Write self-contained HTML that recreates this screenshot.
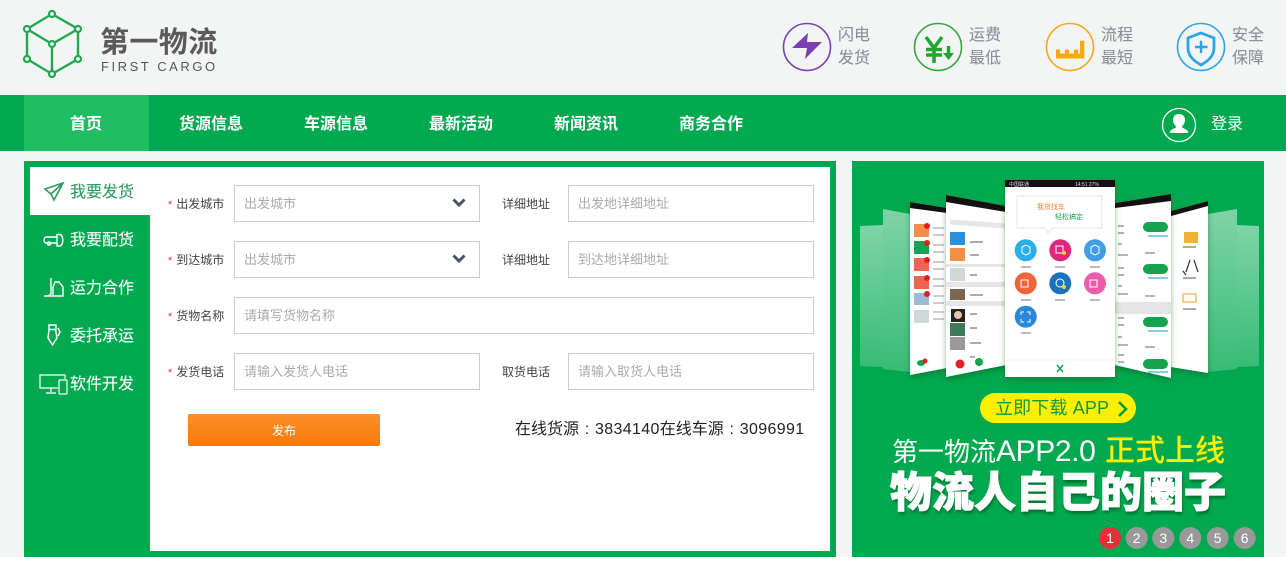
<!DOCTYPE html>
<html lang="zh">
<head>
<meta charset="utf-8">
<title>第一物流</title>
<style>
*{margin:0;padding:0;box-sizing:border-box}
html,body{width:1286px;height:564px;overflow:hidden;background:#fff;font-family:"Liberation Sans","Noto Sans CJK SC",sans-serif}
#page{position:relative;width:1286px;height:564px;overflow:hidden}
.a{position:absolute;white-space:nowrap}
.f{position:absolute;height:37px;background:#fff;border:1px solid #ccc;font-size:13px;line-height:35px;color:#aaa;padding-left:9px}
.l{position:absolute;font-size:12px;color:#444;line-height:18px;white-space:nowrap}
.l i{color:#e33;font-style:normal;margin-right:4px;font-size:11px}
.n{position:absolute;top:97px;height:56px;line-height:56px;font-size:16px;font-weight:700;color:#fff;white-space:nowrap}
.s{position:absolute;left:70px;font-size:16px;font-weight:400;-webkit-text-stroke:.1px currentColor;color:#fff;line-height:24px;white-space:nowrap}
.h{position:absolute;font-size:16px;font-weight:400;-webkit-text-stroke:.1px currentColor;line-height:23px;color:#8a8f99;white-space:nowrap}
.c{display:inline-block;width:16px;text-align:center}
.d{letter-spacing:.35px}
</style>
</head>
<body>
<div id="page">
<div class="a" style="left:0;top:0;width:1286px;height:557px;background:#f3f4f4"></div>

<!-- logo -->
<svg class="a" style="left:20px;top:8px" width="66" height="72" viewBox="0 0 66 72" fill="none" stroke="#22a84f" stroke-width="2.400">
<path d="M32 6L58 21V51L32 66L7 51V21Z"/><path d="M7 21L32 36L58 21M32 36V66"/>
<g fill="#f3f4f4" stroke-width="2.200"><circle cx="32" cy="6" r="3"/><circle cx="58" cy="21" r="3"/><circle cx="58" cy="51" r="3"/><circle cx="32" cy="66" r="3"/><circle cx="7" cy="51" r="3"/><circle cx="7" cy="21" r="3"/><circle cx="32" cy="36" r="3"/></g>
</svg>
<div class="a" style="left:100px;top:23px;font-size:29px;line-height:40px;font-weight:700;color:#5a5a5a;letter-spacing:.4px">第一物流</div>
<div class="a" style="left:101px;top:59px;font-size:13px;line-height:15px;color:#555;letter-spacing:2.550px">FIRST CARGO</div>

<!-- header features -->
<svg class="a" style="left:780px;top:20px" width="500" height="56" viewBox="0 0 500 56" fill="none">
<circle cx="27" cy="27" r="23.500" stroke="#7a3fb0" stroke-width="1.600"/>
<path d="M28 13L12 28H27L25 39L42 22H27Z" fill="#7a3fb0"/>
<circle cx="158" cy="27" r="23.500" stroke="#35a83a" stroke-width="1.600"/>
<path d="M146 17L154 28L162 17M154 28V43M146 29.500H162M146 35H162" stroke="#21a52c" stroke-width="3.600"/>
<path d="M168.500 26V34" stroke="#21a52c" stroke-width="3.400"/>
<path d="M163 33H174L168.500 40Z" fill="#21a52c"/>
<circle cx="290" cy="27" r="23.500" stroke="#f5a818" stroke-width="1.600"/>
<path d="M276 29.500H280V33.500H285V29.500H289V33.500H294V29.500H298V33.500H300V20.700H304.300V38.500H276Z" fill="#f9a80e"/>
<circle cx="421" cy="27" r="23.500" stroke="#2aa5ea" stroke-width="1.600"/>
<path d="M421 13L434 18V28C434 36 428 41 421 45C414 41 408 36 408 28V18Z" stroke="#2aa5ea" stroke-width="2.800"/>
<path d="M415 27H427.500M421 20.700V33" stroke="#2aa5ea" stroke-width="2.400"/>
</svg>
<div class="h" style="left:838px;top:24px">闪电<br>发货</div>
<div class="h" style="left:969px;top:24px">运费<br>最低</div>
<div class="h" style="left:1101px;top:24px">流程<br>最短</div>
<div class="h" style="left:1232px;top:24px">安全<br>保障</div>

<!-- nav -->
<div class="a" style="left:0;top:95px;width:1286px;height:56px;background:#00a94f"></div>
<div class="a" style="left:24px;top:95px;width:125px;height:56px;background:#20bd62"></div>
<div class="n" style="left:70px">首页</div>
<div class="n" style="left:179px">货源信息</div>
<div class="n" style="left:304px">车源信息</div>
<div class="n" style="left:429px">最新活动</div>
<div class="n" style="left:554px">新闻资讯</div>
<div class="n" style="left:679px">商务合作</div>
<svg class="a" style="left:1161px;top:107px" width="36" height="36" viewBox="0 0 36 36">
<circle cx="18" cy="18" r="16.500" fill="none" stroke="#fff" stroke-width="1.300"/>
<path d="M18 7c-4 0-6 2.800-6 6 0 2.600 1.100 4.800 2.800 6v1.700c-2.200 1.100-6 1.700-6 5.300h18.400c0-3.600-3.800-4.200-6-5.300V19c1.700-1.200 2.800-3.400 2.800-6 0-3.200-2-6-6-6z" fill="#fff"/>
</svg>
<div class="a" style="left:1211px;top:113px;font-size:16px;line-height:24px;color:#fff">登录</div>

<!-- form panel -->
<div class="a" style="left:24px;top:161px;width:812px;height:396px;background:#00a94f"></div>
<div class="a" style="left:150px;top:167px;width:680px;height:384px;background:#fff"></div>
<div class="a" style="left:30px;top:167px;width:120px;height:48px;background:#fff"></div>

<div class="s" style="top:181px;color:#2f9a5c">我要发货</div>
<div class="s" style="top:229px">我要配货</div>
<div class="s" style="top:277px">运力合作</div>
<div class="s" style="top:325px">委托承运</div>
<div class="s" style="top:373px">软件开发</div>

<svg class="a" style="left:38px;top:176px" width="30" height="30" viewBox="0 0 30 30" fill="none" stroke="#2f9a5c" stroke-width="1.600"><path d="M25 7L7 13L13 18L16 24ZM13 18L25 7"/></svg>
<svg class="a" style="left:38px;top:224px" width="30" height="30" viewBox="0 0 30 30" fill="none" stroke="#fff" stroke-width="1.400"><path d="M19 13H8C5.500 13 5.500 19 8 19H19M19 10.500H21.500C26 10.500 26 22 21.500 22H19Z"/><circle cx="11" cy="19.500" r="1.600"/></svg>
<svg class="a" style="left:38px;top:272px" width="30" height="30" viewBox="0 0 30 30" fill="none" stroke="#fff" stroke-width="1.400"><path d="M13 6V21C13 23 11 24 6 24H25V15L21 10H17L15 15V24"/></svg>
<svg class="a" style="left:39px;top:319px" width="30" height="30" viewBox="0 0 30 30" fill="none" stroke="#fff" stroke-width="1.400"><path d="M10 6H17V10.500H10ZM10 10.500L9 19L13.500 26L18 19L16.500 10.500M19 9L21 13L19 17"/></svg>
<svg class="a" style="left:38px;top:372px" width="32" height="26" viewBox="0 0 32 26" fill="none" stroke="#fff" stroke-width="1.200"><path d="M20 16H2V3H27V7M13 16V20M8 21H18"/><rect x="21" y="8" width="8" height="14" rx="1"/></svg>

<!-- form -->
<div class="l" style="left:168px;top:195px"><i>*</i>出发城市</div>
<div class="l" style="left:168px;top:251px"><i>*</i>到达城市</div>
<div class="l" style="left:168px;top:307px"><i>*</i>货物名称</div>
<div class="l" style="left:168px;top:363px"><i>*</i>发货电话</div>
<div class="l" style="left:502px;top:195px">详细地址</div>
<div class="l" style="left:502px;top:251px">详细地址</div>
<div class="l" style="left:502px;top:363px">取货电话</div>

<div class="f" style="left:234px;top:185px;width:246px">出发城市</div>
<div class="f" style="left:234px;top:241px;width:246px">出发城市</div>
<div class="f" style="left:234px;top:297px;width:580px">请填写货物名称</div>
<div class="f" style="left:234px;top:353px;width:246px">请输入发货人电话</div>
<div class="f" style="left:568px;top:185px;width:246px">出发地详细地址</div>
<div class="f" style="left:568px;top:241px;width:246px">到达地详细地址</div>
<div class="f" style="left:568px;top:353px;width:246px">请输入取货人电话</div>
<svg class="a" style="left:452px;top:198px" width="14" height="10" viewBox="0 0 14 10" fill="none" stroke="#4a5560" stroke-width="3"><path d="M1.500 1.500L7 7L12.500 1.500"/></svg>
<svg class="a" style="left:452px;top:254px" width="14" height="10" viewBox="0 0 14 10" fill="none" stroke="#4a5560" stroke-width="3"><path d="M1.500 1.500L7 7L12.500 1.500"/></svg>

<div class="a" style="left:188px;top:414px;width:192px;height:32px;border-radius:2px;background:linear-gradient(#f98f2e,#f97a05);color:#fff;font-size:12px;line-height:34px;text-align:center">发布</div>
<div class="a" style="left:515px;top:418px;font-size:16px;line-height:24px;color:#222">在线货源<span class="c">:</span><span class="d">3834140</span>在线车源<span class="c">:</span><span class="d">3096991</span></div>

<!-- banner -->
<div class="a" style="left:852px;top:161px;width:412px;height:396px;background:#00a94f;overflow:hidden"></div>
<svg class="a" style="left:852px;top:161px" width="412" height="240" viewBox="852 161 412 240">
<defs>
<linearGradient id="gl" x1="0" y1="0" x2="0" y2="1"><stop offset="0" stop-color="#fff" stop-opacity=".5"/><stop offset="1" stop-color="#fff" stop-opacity=".22"/></linearGradient>
<filter id="sh" x="-20%" y="-10%" width="140%" height="120%"><feDropShadow dx="0" dy="3" stdDeviation="3" flood-color="#00451f" flood-opacity=".4"/></filter>
</defs>
<path d="M860 226L883 225V367L860 366Z" fill="url(#gl)"/>
<path d="M883 209L910 214V372L883 369Z" fill="url(#gl)" />
<path d="M1259 226L1237 225V367L1259 366Z" fill="url(#gl)"/>
<path d="M1237 209L1208 214V372L1237 369Z" fill="url(#gl)"/>

<!-- phone far left -->
<path d="M910 202L947 208V368L910 375Z" fill="#fff" filter="url(#sh)"/>
<path d="M910 202L947 208V213L910 208Z" fill="#111"/>
<g>
<rect x="914" y="224" width="15" height="13" fill="#f0904a"/><rect x="914" y="241" width="15" height="13" fill="#16a34f"/><rect x="914" y="258" width="15" height="13" fill="#ee6352"/><rect x="914" y="276" width="15" height="13" fill="#ee6352"/><rect x="914" y="293" width="15" height="12" fill="#9dbbd2"/><rect x="914" y="310" width="15" height="13" fill="#cfd8d6"/>
<circle cx="927" cy="226" r="3" fill="#e02020"/><circle cx="927" cy="243" r="3" fill="#e02020"/><circle cx="927" cy="260" r="3" fill="#e02020"/><circle cx="927" cy="278" r="3" fill="#e02020"/><circle cx="927" cy="294" r="3" fill="#e02020"/>
<path d="M933 228H944M933 235H944M933 245H944M933 252H944M933 262H944M933 269H944M933 279H944M933 286H944M933 296H944M933 303H944M933 312H944M933 319H944" stroke="#bbb" stroke-width="1.500"/>
<ellipse cx="921" cy="363" rx="4" ry="3" fill="#16a34f"/><circle cx="925" cy="361" r="2.500" fill="#e02020"/>
</g>
<!-- phone left -->
<path d="M946 195L1006 206V365L946 377Z" fill="#fff" filter="url(#sh)"/>
<path d="M946 195L1006 206V212L946 202Z" fill="#111"/>
<path d="M950 222L1005 226" stroke="#e6e6e6" stroke-width="5"/>
<rect x="950" y="232" width="15" height="13" fill="#2b90d9"/><rect x="950" y="248" width="15" height="13" fill="#f0904a"/>
<path d="M946 264H1006V267H946ZM946 282H1006V287H946ZM946 301H1006V306H946Z" fill="#e6e6e6"/>
<rect x="950" y="268" width="15" height="13" fill="#cfd8d6"/><rect x="950" y="289" width="15" height="11" fill="#7c6650"/>
<rect x="951" y="309" width="14" height="13" fill="#222"/><circle cx="958" cy="315" r="4" fill="#e6c3a9"/>
<rect x="950" y="323" width="15" height="13" fill="#3d7a5a"/><rect x="950" y="337" width="15" height="13" fill="#999"/>
<path d="M970 242H983M970 255H979M970 275H977M970 295H983M970 314H977M970 328H977M970 343H981M970 357H975" stroke="#aaa" stroke-width="2"/>
<circle cx="960" cy="364" r="4.500" fill="#e02020"/><circle cx="979" cy="362" r="4" fill="#16a34f"/>
<!-- phone right far -->
<path d="M1171 211L1208 201V373L1171 367Z" fill="#fff" filter="url(#sh)"/>
<path d="M1171 211L1208 201V206L1171 216Z" fill="#111"/>
<rect x="1184" y="232" width="14" height="11" fill="#f2b134"/>
<path d="M1186 275L1183 271M1190 260L1186 272M1194 260L1198 272" stroke="#333" stroke-width="1.200"/>
<rect x="1183" y="294" width="13" height="8" fill="#fff" stroke="#ee9a22"/>
<path d="M1183 247H1196M1183 278H1196M1183 309H1196" stroke="#aaa" stroke-width="2"/>
<!-- phone right -->
<path d="M1115 203L1171 194V378L1115 365Z" fill="#fff" filter="url(#sh)"/>
<path d="M1115 203L1171 194V201L1115 208Z" fill="#111"/>
<rect x="1115" y="302" width="56" height="12" fill="#e5e5e5"/>
<g fill="#16a34f"><rect x="1143" y="222" width="25" height="10" rx="5"/><rect x="1143" y="264" width="25" height="10" rx="5"/><rect x="1143" y="317" width="25" height="10" rx="5"/><rect x="1143" y="359" width="25" height="10" rx="5"/></g>
<path d="M1148 236H1168M1148 278H1168M1148 331H1168M1148 372H1168" stroke="#62b8e0" stroke-width="1.500"/>
<path d="M1118 226H1124M1118 233H1124M1118 244H1122M1118 255H1128M1118 268H1124M1118 275H1124M1118 286H1122M1118 294H1128M1118 318H1124M1118 325H1124M1118 337H1122M1118 345H1128M1118 355H1124M1118 362H1124M1145 253H1155M1145 296H1155M1145 347H1155" stroke="#aaa" stroke-width="1.800"/>
<!-- phone centre -->
<rect x="1005" y="180" width="110" height="197" fill="#fff" filter="url(#sh)"/>
<rect x="1005" y="180" width="110" height="7" fill="#111"/>
<text x="1009" y="186" font-size="5" fill="#ddd" font-family="Noto Sans CJK SC,sans-serif">中国联通</text>
<text x="1075" y="186" font-size="5" fill="#ddd" font-family="Liberation Sans,sans-serif">14:51 27%</text>
<path d="M1017 196H1102V228H1053L1048 233L1045 228H1017Z" fill="#fff" stroke="#e8e8e8" stroke-width="1.200"/>
<circle cx="1025.700" cy="250.300" r="11" fill="#29b0ea"/><circle cx="1060.300" cy="250.300" r="11" fill="#e0267f"/><circle cx="1095" cy="250.300" r="11" fill="#419de6"/>
<circle cx="1025.700" cy="283.300" r="11" fill="#f0643c"/><circle cx="1060.300" cy="283.300" r="11" fill="#1b72bd"/><circle cx="1095" cy="283.300" r="11" fill="#ec5cab"/>
<circle cx="1025.700" cy="316.700" r="11" fill="#2a88dc"/>
<g fill="none" stroke="#fff" stroke-width="1"><path d="M1022 247L1026 245L1030 247V253L1026 255L1022 253Z"/><rect x="1056" y="246" width="7" height="7"/><path d="M1091 247L1095 245L1099 247V253L1095 255L1091 253Z"/><rect x="1021" y="280" width="7" height="7"/><circle cx="1060" cy="283" r="4"/><rect x="1090" y="280" width="7" height="7"/><path d="M1021 315V312H1024M1027 312H1030V315M1030 319V322H1027M1024 322H1021V319"/></g>
<circle cx="1064" cy="253" r="2" fill="#f9d423"/><circle cx="1064" cy="287" r="2" fill="#f9d423"/>
<path d="M1021 267H1031M1055 267H1065M1090 267H1100M1021 300H1031M1055 300H1065M1090 300H1100M1021 333H1031" stroke="#bbb" stroke-width="2"/>
<path d="M1005 360H1115" stroke="#eee"/>
<path d="M1057 365L1063 372M1063 365L1057 372" stroke="#16a34f" stroke-width="1.600"/>
<text x="1037" y="209" font-size="7" fill="#f08030" font-family="Noto Sans CJK SC,sans-serif">我货找车</text>
<text x="1055" y="219" font-size="7" fill="#16a34f" font-family="Noto Sans CJK SC,sans-serif">轻松搞定</text>
</svg>

<div class="a" style="left:980px;top:393px;width:156px;height:30px;border-radius:15px;background:#fff000"></div>
<div class="a" style="left:995px;top:396px;font-size:18px;line-height:24px;color:#10983f;letter-spacing:.15px">立即下载 APP</div>
<svg class="a" style="left:1116px;top:400px" width="14" height="18" viewBox="0 0 14 18" fill="none" stroke="#10983f" stroke-width="2.600"><path d="M3 2L10 9L3 16"/></svg>

<div class="a" style="left:892px;top:432px;font-size:26px;line-height:40px;color:#fff">第一物流<span style="font-size:30px;letter-spacing:-.4px">APP2.0</span></div>
<div class="a" style="left:1105px;top:432px;font-size:30px;line-height:40px;color:#fff000;font-weight:500">正式上线</div>
<div class="a" style="left:890px;top:464px;font-size:42px;line-height:58px;color:#fff;font-weight:900;-webkit-text-stroke:1px #fff;text-shadow:1px 3px 3px rgba(0,60,20,.55)">物流人自己的圈子</div>

<svg class="a" style="left:1098px;top:526px" width="160" height="24" viewBox="1098 526 160 24" font-family="Liberation Sans,sans-serif" font-size="14" text-anchor="middle" fill="#fff">
<circle cx="1110" cy="538" r="11" fill="#e5303c"/><circle cx="1136.700" cy="538" r="11" fill="#999"/><circle cx="1163.300" cy="538" r="11" fill="#999"/><circle cx="1190.300" cy="538" r="11" fill="#999"/><circle cx="1217.700" cy="538" r="11" fill="#999"/><circle cx="1244.700" cy="538" r="11" fill="#999"/>
<text x="1110" y="543">1</text><text x="1136.700" y="543">2</text><text x="1163.300" y="543">3</text><text x="1190.300" y="543">4</text><text x="1217.700" y="543">5</text><text x="1244.700" y="543">6</text>
</svg>
</div>
</body>
</html>
